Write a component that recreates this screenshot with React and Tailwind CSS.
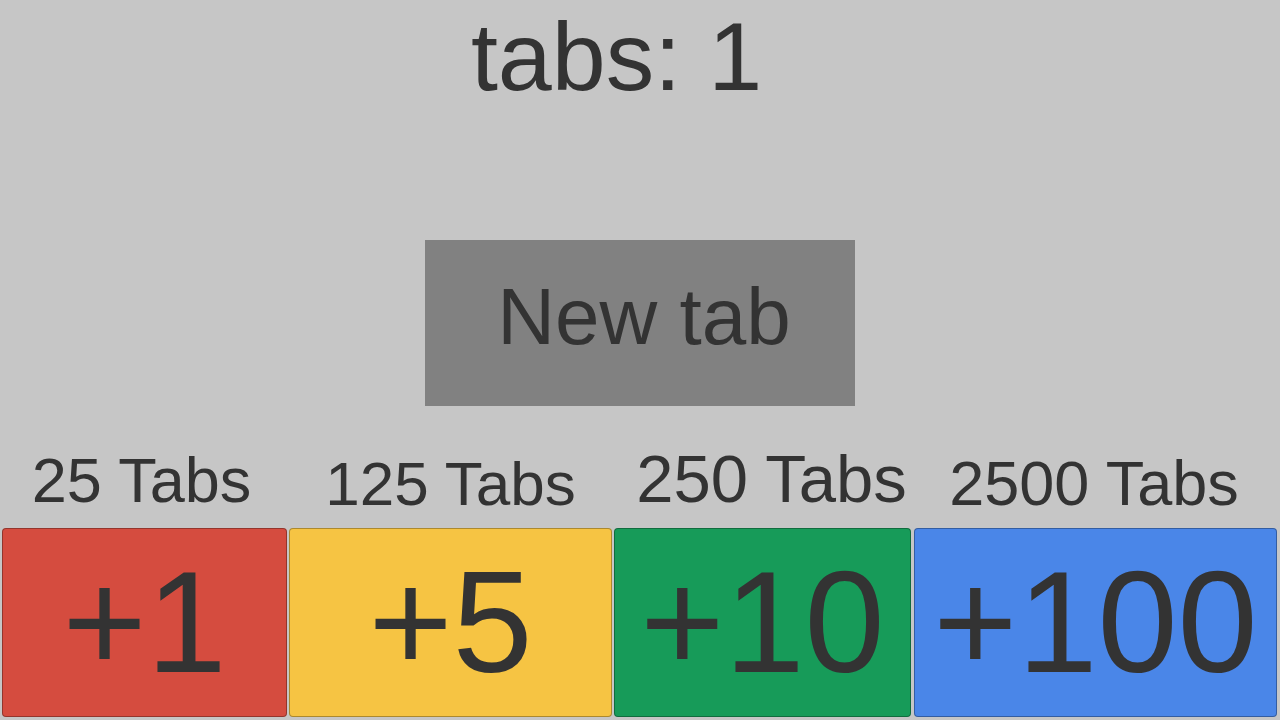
import React, { useState } from 'react';

const BUTTONS = [
  { label: '25 Tabs', add: 1, width: 'w-[285px]', bg: 'bg-[#d54c3f]', labelClass: 'text-[63px] mb-[16px] mr-[6px]' },
  { label: '125 Tabs', add: 5, width: 'w-[323px]', bg: 'bg-[#f6c443]', labelClass: 'text-[62px] mb-[13px]' },
  { label: '250 Tabs', add: 10, width: 'w-[297px] mr-[1px]', bg: 'bg-[#179b59]', labelClass: 'text-[67px] mb-[16px] ml-[18px]' },
  { label: '2500 Tabs', add: 100, width: 'w-[363px]', bg: 'bg-[#4a86e8]', labelClass: 'text-[63px] mb-[13px] mr-[3px]' },
];

const App = () => {
  const [tabs, setTabs] = useState(1);

  return (
    <div className="h-[720px] w-[1280px] bg-[#c6c6c6] text-[#333333] font-['Liberation_Sans',Arial,sans-serif] flex flex-col overflow-hidden">
      {/* Counter */}
      <div className="flex justify-center pt-[8px]">
        <h1 className="text-[97px] leading-none mr-[47px] whitespace-nowrap">tabs: {tabs}</h1>
      </div>

      {/* New tab */}
      <div className="flex justify-center mt-[135px]">
        <button
          onClick={() => setTabs(tabs + 1)}
          className="w-[430px] h-[166px] bg-[#818181] flex items-center justify-center pl-[8px] pb-[13px] text-[80px] leading-none whitespace-nowrap"
        >
          New tab
        </button>
      </div>

      {/* Bulk buttons */}
      <div className="mt-auto flex items-end gap-[2px] pl-[2px] pb-[3px]">
        {BUTTONS.map((b) => (
          <div key={b.label} className={`${b.width} flex flex-col items-center`}>
            <span className={`${b.labelClass} leading-none whitespace-nowrap`}>{b.label}</span>
            <button
              onClick={() => setTabs(tabs + b.add)}
              className={`${b.bg} w-full h-[189px] rounded-[4px] border border-black/30 flex items-center justify-center text-[144px] leading-none whitespace-nowrap`}
            >
              +{b.add}
            </button>
          </div>
        ))}
      </div>
    </div>
  );
};

export default App;
